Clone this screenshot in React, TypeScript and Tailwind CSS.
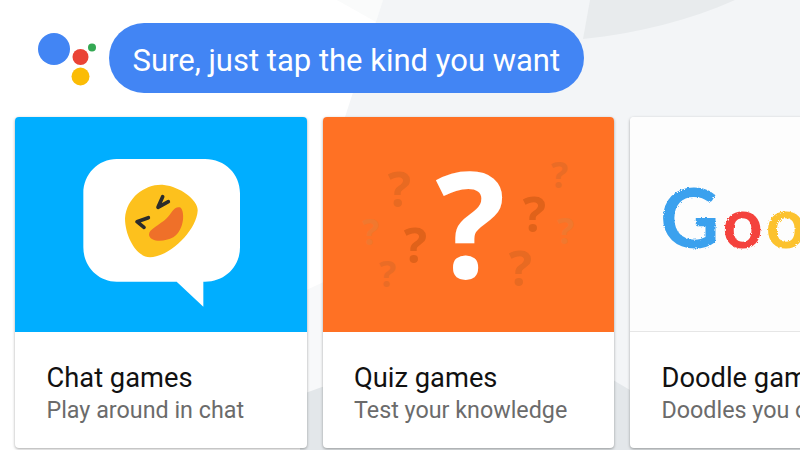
const cards = [
  { title: "Chat games", sub: "Play around in chat" },
  { title: "Quiz games", sub: "Test your knowledge" },
  { title: "Doodle games", sub: "Doodles you can play" },
];

const marks = [
  { x: 400, y: 188, size: "text-[49px]", tone: "text-[#e86a22]" },
  { x: 371, y: 232, size: "text-[36px]", tone: "text-[#f0782f]" },
  { x: 416, y: 244, size: "text-[49px]", tone: "text-[#e0621a]" },
  { x: 388, y: 274, size: "text-[36px]", tone: "text-[#ea6c26]" },
  { x: 535, y: 213, size: "text-[49px]", tone: "text-[#e0621a]" },
  { x: 560, y: 175, size: "text-[36px]", tone: "text-[#ea6c26]" },
  { x: 566, y: 231, size: "text-[36px]", tone: "text-[#f0782f]" },
  { x: 521, y: 267, size: "text-[49px]", tone: "text-[#e86a22]" },
];

function AssistantLogo() {
  return (
    <svg width="60" height="60" viewBox="0 0 60 60" className="shrink-0">
      <circle cx="16" cy="16" r="16" fill="#4285f4" />
      <circle cx="42.5" cy="24" r="8" fill="#ea4335" />
      <circle cx="42.5" cy="43.5" r="9" fill="#fbbc05" />
      <circle cx="54" cy="14.5" r="4" fill="#34a853" />
    </svg>
  );
}

function ChatArt() {
  return (
    <svg width="180" height="170" viewBox="0 0 540 510" className="ml-[55px] mt-[33px]">
      <path
        d="M140 27H405C465 27 510 72 510 130V292C510 350 465 395 405 395H400V470L320 395H140C85 395 40 350 40 292V130C40 72 85 27 140 27Z"
        fill="#fff"
      />
      <path
        d="M165 205C170 140 230 100 282 105C330 110 385 150 383 182C380 240 300 320 240 322C200 322 165 260 165 205Z"
        fill="#fdc11d"
      />
      <path
        d="M330 172C345 180 345 240 310 262C280 278 240 275 237 255C235 238 270 225 290 205C305 190 312 168 330 172Z"
        fill="#ef7029"
      />
      <path d="M278 140L264 172L295 155" stroke="#2b2b2b" strokeWidth="11" strokeLinecap="round" strokeLinejoin="round" fill="none" />
      <path d="M235 203L201 215L222 232" stroke="#2b2b2b" strokeWidth="11" strokeLinecap="round" strokeLinejoin="round" fill="none" />
    </svg>
  );
}

function QuizArt() {
  return (
    <div className="relative h-full font-['Open_Sans',sans-serif] font-bold leading-none">
      {marks.map((m) => (
        <span
          key={`${m.x}-${m.y}`}
          className={`absolute -translate-x-1/2 -translate-y-1/2 ${m.size} ${m.tone}`}
          style={{ left: m.x - 323, top: m.y - 117 }}
        >
          ?
        </span>
      ))}
      <span className="absolute left-[113px] top-[31px] text-[147px] text-white">?</span>
    </div>
  );
}

function DoodleArt() {
  return (
    <div className="flex h-full items-center pb-[16px] pl-[30px] font-['Lato',sans-serif] font-bold leading-none [filter:url(#crayon)]">
      <div className="flex items-baseline gap-[3px]">
        <span className="text-[82px] text-[#3ba1ee]">G</span>
        <span className="text-[70px] text-[#f4433c]">o</span>
        <span className="text-[70px] text-[#fcc22e]">o</span>
      </div>
    </div>
  );
}

function GameCard({ index }: { index: number }) {
  const card = cards[index];
  return (
    <div className="flex h-[331px] w-[291.5px] shrink-0 flex-col overflow-hidden rounded-[4px] bg-white shadow-[0_1px_3px_rgba(0,0,0,0.35)]">
      {index === 0 && (
        <div className="h-[215px] shrink-0 overflow-hidden bg-[#00aeff]">
          <ChatArt />
        </div>
      )}
      {index === 1 && (
        <div className="h-[215px] shrink-0 overflow-hidden bg-[#ff7124]">
          <QuizArt />
        </div>
      )}
      {index === 2 && (
        <div className="h-[215px] shrink-0 overflow-hidden border-b border-[#e6e6e6] bg-[#fdfdfd]">
          <DoodleArt />
        </div>
      )}
      <div className="px-[31.5px] pt-[28px]">
        <div className="whitespace-nowrap text-[27.3px] leading-[36px] text-[#111]">{card.title}</div>
        <div className="whitespace-nowrap text-[23.3px] leading-[29px] text-[#6b6b6b]">{card.sub}</div>
      </div>
    </div>
  );
}

export default function App() {
  return (
    <div className="relative h-[450px] w-[800px] overflow-hidden bg-white font-['Roboto',sans-serif]">
      <svg width="800" height="450" viewBox="0 0 800 450" className="absolute inset-0">
        <path d="M337 0H383L376 22Z" fill="#fafbfb" />
        <path d="M383 0H800V450H345L345 117Z" fill="#f3f5f7" />
        <path d="M300 293L345 272V450H300Z" fill="#f8f9fa" />
        <path d="M590 0H735C690 20 640 33 583 39Z" fill="#e8ebed" />
        <path d="M300 395L322 387L450 360L613 380L630 390L800 410V450H300Z" fill="#e3e7ea" />
        <filter id="crayon">
          <feTurbulence type="fractalNoise" baseFrequency="0.7" numOctaves="2" />
          <feDisplacementMap in="SourceGraphic" scale="3" />
        </filter>
      </svg>
      <div className="relative flex flex-col">
        <div className="flex h-[117px] pt-[23px]">
          <div className="pl-[38px] pt-[10px]">
            <AssistantLogo />
          </div>
          <div className="ml-[11px] flex h-[70px] w-[475px] items-center rounded-[35px] bg-[#4285f4] pl-[23.5px] pt-[6px] text-[31px] text-white">
            Sure, just tap the kind you want
          </div>
        </div>
        <div className="flex gap-[16px] pl-[15px]">
          <GameCard index={0} />
          <GameCard index={1} />
          <GameCard index={2} />
        </div>
      </div>
    </div>
  );
}
